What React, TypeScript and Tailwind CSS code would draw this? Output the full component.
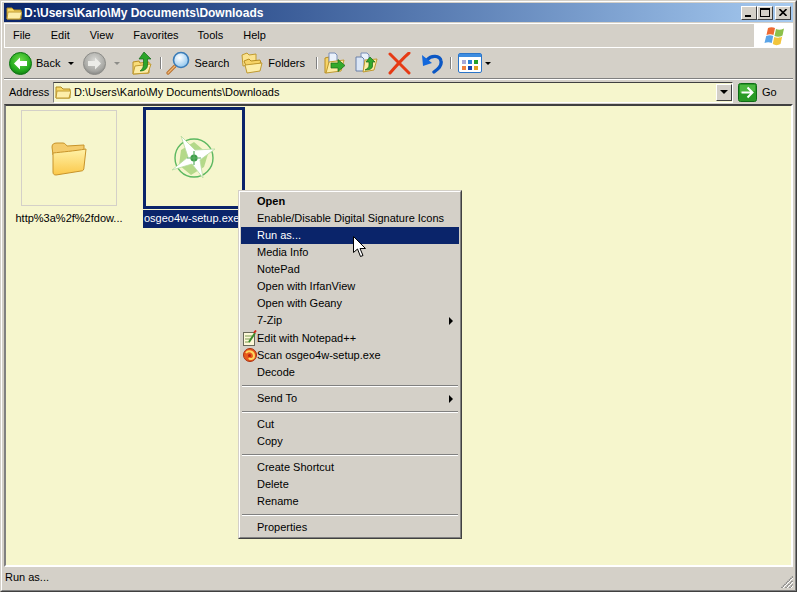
import type { ReactNode } from 'react';

const menuItems = ['File', 'Edit', 'View', 'Favorites', 'Tools', 'Help'];

type Row =
  | { kind: 'sep' }
  | { kind: 'item'; label: string; bold?: boolean; active?: boolean; sub?: boolean; icon?: ReactNode; tall?: boolean };

function FolderGlyph({ x = 0, y = 0 }: { x?: number; y?: number }) {
  return (
    <g transform={`translate(${x} ${y})`}>
      <path d="M1 3 L6 3 L8 5 L15 5 L15 14 L1 14 Z" fill="#f8d868" stroke="#b08a20" strokeWidth="1" />
      <path d="M2 7 L16 7 L14 14 L1 14 Z" fill="#fdeeaa" stroke="#c09a30" strokeWidth="1" />
    </g>
  );
}

function RoundArrow({ grey, flip }: { grey?: boolean; flip?: boolean }) {
  const id = grey ? 'roundGrey' : 'roundGreen';
  return (
    <svg width="23" height="23" viewBox="0 0 23 23" className="block">
      <defs>
        <radialGradient id={id} cx="50%" cy="35%" r="70%">
          <stop offset="0%" stopColor={grey ? '#d8d8d4' : '#6fdc4a'} />
          <stop offset="70%" stopColor={grey ? '#a8a8a4' : '#22a81c'} />
          <stop offset="100%" stopColor={grey ? '#7c7c7a' : '#0c6e10'} />
        </radialGradient>
      </defs>
      <circle cx="11.5" cy="11.5" r="11" fill={`url(#${id})`} stroke={grey ? '#8c8c88' : '#0f7414'} />
      <g transform={flip ? 'matrix(-1 0 0 1 23 0)' : undefined}>
        <path d="M5 11.5 L11 5.5 L11 9 L18 9 L18 14 L11 14 L11 17.5 Z" fill={grey ? '#ecece8' : '#ffffff'} />
      </g>
    </svg>
  );
}

function UpIcon() {
  return (
    <svg width="20" height="24" viewBox="0 0 20 24" className="block">
      <path d="M1 11 L7 10 L8 12 L17 11 L17 22 L1 23 Z" fill="#f9dc78" stroke="#b88e22" />
      <path d="M3 15 L19 13 L16 22 L1 23 Z" fill="#fdeca4" stroke="#c09a30" />
      <path d="M12 1 L19 8 L15.5 8 L15.5 14 C15.5 18 12 20 8 20 C10.5 18 11.5 16 11.5 13 L11.5 8 L7 8 Z" fill="#2ca52a" stroke="#14691a" strokeWidth="0.7" />
    </svg>
  );
}

function SearchIcon() {
  return (
    <svg width="25" height="25" viewBox="0 0 25 25" className="block">
      <defs>
        <radialGradient id="lens" cx="40%" cy="35%" r="70%">
          <stop offset="0%" stopColor="#ffffff" />
          <stop offset="100%" stopColor="#8cc4ee" />
        </radialGradient>
      </defs>
      <path d="M9 15 L2 22" stroke="#b8702c" strokeWidth="3.2" strokeLinecap="round" />
      <path d="M9 15 L2 22" stroke="#f0b878" strokeWidth="1.2" strokeLinecap="round" />
      <circle cx="15" cy="9" r="7.5" fill="url(#lens)" stroke="#3a7cb8" strokeWidth="1.6" />
    </svg>
  );
}

function FoldersIcon() {
  return (
    <svg width="22" height="22" viewBox="0 0 22 22" className="block">
      <path d="M1 3 L6 1 L8 3 L15 2 L15 12 L2 14 Z" fill="#fbe390" stroke="#c09a30" />
      <path d="M3 9 L8 7 L10 9 L19 8 L20 11 L5 14 Z" fill="#f7d468" stroke="#b88e22" />
      <path d="M6 21 L4 13 L21 11 L19 19 Z" fill="#fdeeaa" stroke="#c09a30" />
    </svg>
  );
}

function MoveToIcon() {
  return (
    <svg width="22" height="22" viewBox="0 0 22 22" className="block">
      <path d="M1 6 L5 5 L5 20 L1 21 Z" fill="#f7d468" stroke="#b88e22" />
      <path d="M5 1 L11 1 L13 3 L13 12 L5 13 Z" fill="#eaf1fb" stroke="#7a8fb8" />
      <path d="M2 21 L5 10 L20 8 L17 19 Z" fill="#fdeca4" stroke="#c09a30" />
      <path d="M7 11 L14 11 L14 7.5 L21 13.5 L14 19.5 L14 16 L7 16 Z" fill="#33a92c" stroke="#14691a" strokeWidth="0.7" />
    </svg>
  );
}

function CopyToIcon() {
  return (
    <svg width="23" height="22" viewBox="0 0 23 22" className="block">
      <path d="M6 1 L12 1 L14 3 L14 12 L6 12 Z" fill="#eaf1fb" stroke="#7a8fb8" />
      <path d="M1 5 L7 5 L9 7 L9 19 L1 19 Z" fill="#dbe6f6" stroke="#6a80a8" />
      <path d="M8 20 L10 8 L22 7 L19 18 Z" fill="#fdeca4" stroke="#c09a30" />
      <path d="M15 5 L20 10 L17.5 10 L17.5 14 C17.5 17 14 18 10 18 C13 16.5 14 15 14 13 L14 10 L11 10 Z" fill="#33a92c" stroke="#14691a" strokeWidth="0.7" />
    </svg>
  );
}

function DeleteIcon() {
  return (
    <svg width="23" height="23" viewBox="0 0 23 23" className="block">
      <path d="M2 2 C8 8 14 14 21 21" stroke="#e63a14" strokeWidth="3" fill="none" strokeLinecap="round" />
      <path d="M21 1 C14 7 8 14 2 21" stroke="#e63a14" strokeWidth="3" fill="none" strokeLinecap="round" />
    </svg>
  );
}

function UndoIcon() {
  return (
    <svg width="22" height="21" viewBox="0 0 22 21" className="block">
      <path d="M6 7 C10 2 19 2 20 8 C21 13 17 16 13 19" stroke="#0b57c4" strokeWidth="3.4" fill="none" strokeLinecap="round" />
      <path d="M1 2 L2 13 L11 10 Z" fill="#1368dc" />
    </svg>
  );
}

function ViewsIcon() {
  const colors = ['#a8a8d8', '#2d82d8', '#22a02a', '#f08040', '#1644b0', '#e0a020'];
  return (
    <svg width="24" height="20" viewBox="0 0 24 20" className="block">
      <rect x="0.5" y="0.5" width="23" height="19" rx="1.5" fill="#ffffff" stroke="#2a74c8" />
      <rect x="1" y="1" width="22" height="3" fill="#3d8ce0" />
      {colors.map((c, i) => (
        <rect key={c} x={4 + (i % 3) * 6} y={7 + Math.floor(i / 3) * 6} width="4" height="4" fill={c} />
      ))}
    </svg>
  );
}

function FlagIcon() {
  return (
    <svg width="22" height="20" viewBox="0 0 22 20" className="block">
      <path d="M5 2 C7 1 10 1 12 2 L10.5 9 C8.5 8 6 8 3.5 9 Z" fill="#ee6a32" />
      <path d="M13 3 C15 4 18 4 21 2.5 L19.5 9.5 C17 11 14 11 11.5 10 Z" fill="#8cc04a" />
      <path d="M3.2 10 C6 9 8 9 10.2 10 L8.8 17 C6.5 16 4 16 1.5 17 Z" fill="#5aa4e8" />
      <path d="M11.2 11 C14 12 17 12 19.2 10.5 L17.5 18 C15 19.5 12 19.5 9.8 18 Z" fill="#f2c53c" />
    </svg>
  );
}

function GoIcon() {
  return (
    <svg width="19" height="19" viewBox="0 0 19 19" className="block">
      <rect x="0.5" y="0.5" width="18" height="18" rx="2" fill="#2a9a26" stroke="#0f6c16" />
      <path d="M2 2 L17 2 L17 8 L2 10 Z" fill="#4cb840" />
      <path d="M3.5 9.5 L14 9.5 M9.5 4.5 L14.5 9.5 L9.5 14.5" stroke="#ffffff" strokeWidth="2" fill="none" />
    </svg>
  );
}

function ThumbFolder() {
  return (
    <svg width="38" height="38" viewBox="0 0 38 38" className="block">
      <defs>
        <linearGradient id="thumbFolder" x1="0" y1="0" x2="0" y2="1">
          <stop offset="0%" stopColor="#fff2a8" />
          <stop offset="100%" stopColor="#fbc84a" />
        </linearGradient>
      </defs>
      <path d="M2 8 C2 5 4 4 7 4 L13 4 C15 4 16 6 17 7 L34 6 L34 12 L3 16 Z" fill="#f4cc6c" stroke="#c8942a" />
      <path d="M3 14 C12 13 24 12 36 10 L34 28 C34 31 33 32 31 32 L6 36 C4 36 3 35 3 33 Z" fill="url(#thumbFolder)" stroke="#c8942a" />
    </svg>
  );
}

function StarLogo() {
  return (
    <svg width="46" height="46" viewBox="0 0 46 46" className="block">
      <circle cx="23" cy="23" r="19" fill="none" stroke="#5cb860" strokeWidth="1.4" />
      <path d="M23 7 L37 19 L33 32 L20 40 L8 30 L10 15 Z" fill="#a8d47c" opacity="0.85" />
      <path d="M10 1 L24 15 L44 14 L29 25 L32 43 L21 29 L1 35 L17 22 Z" fill="#ffffff" stroke="#b8dca0" strokeWidth="0.8" />
      <circle cx="23" cy="23" r="3.6" fill="#3c9c48" />
      <path d="M23 16 L23 30 M16 23 L30 23" stroke="#5cb064" strokeWidth="1.2" />
    </svg>
  );
}

function NotepadIcon() {
  return (
    <svg width="14" height="16" viewBox="0 0 14 16" className="block">
      <rect x="0.5" y="2.5" width="11" height="13" fill="#fdf8d8" stroke="#6a6a5a" />
      <path d="M2 6 L9 6 M2 9 L8 9 M2 12 L7 12" stroke="#7a9a50" />
      <path d="M6 12 L12 3" stroke="#3c8c2c" strokeWidth="2" />
      <path d="M11 3 L13 0.5" stroke="#d02818" strokeWidth="2" />
    </svg>
  );
}

function ScanIcon() {
  return (
    <svg width="14" height="14" viewBox="0 0 14 14" className="block">
      <circle cx="7" cy="7" r="6.5" fill="#e85a1c" stroke="#a83010" />
      <path d="M3 5 C5 2 11 3 11 8 C11 11 7 12 6 10" fill="none" stroke="#ffd860" strokeWidth="2" />
      <circle cx="6.5" cy="7.5" r="1.5" fill="#b82010" />
    </svg>
  );
}

function Cursor() {
  return (
    <svg width="14" height="22" viewBox="0 0 14 22" className="block">
      <path d="M0.5 0.5 L0.5 16.5 L4.5 13 L7.5 20.5 L10 19.5 L7 12.5 L12.5 12.5 Z" fill="#ffffff" stroke="#000000" />
    </svg>
  );
}

function Grip() {
  return (
    <svg width="13" height="13" viewBox="0 0 13 13" className="block">
      {[0, 4, 8].map((o) => (
        <g key={o}>
          <path d={`M${o + 1.5} 13 L13 ${o + 1.5}`} stroke="#808080" strokeWidth="1.4" strokeDasharray="1.4 0.7" />
          <path d={`M${o + 3} 13 L13 ${o + 3}`} stroke="#ffffff" strokeWidth="1" />
        </g>
      ))}
    </svg>
  );
}

function DropArrow({ grey }: { grey?: boolean }) {
  return <span className={`block h-0 w-0 border-x-[3px] border-t-[3px] border-x-transparent ${grey ? 'border-t-[#8c8c88]' : 'border-t-black'}`} />;
}

function ToolSep() {
  return <span className="h-[26px] w-[2px] border-l border-l-[#808080] border-r border-r-white" />;
}

function CaptionButton({ children }: { children: ReactNode }) {
  return (
    <span className="flex h-[14px] w-[16px] items-center justify-center border border-t-white border-l-white border-r-[#404040] border-b-[#404040] bg-[#d4d0c8]">
      {children}
    </span>
  );
}

const rows: Row[] = [
  { kind: 'item', label: 'Open', bold: true },
  { kind: 'item', label: 'Enable/Disable Digital Signature Icons' },
  { kind: 'item', label: 'Run as...', active: true },
  { kind: 'item', label: 'Media Info' },
  { kind: 'item', label: 'NotePad' },
  { kind: 'item', label: 'Open with IrfanView' },
  { kind: 'item', label: 'Open with Geany' },
  { kind: 'item', label: '7-Zip', sub: true },
  { kind: 'item', label: 'Edit with Notepad++', icon: <NotepadIcon />, tall: true },
  { kind: 'item', label: 'Scan osgeo4w-setup.exe', icon: <ScanIcon /> },
  { kind: 'item', label: 'Decode' },
  { kind: 'sep' },
  { kind: 'item', label: 'Send To', sub: true },
  { kind: 'sep' },
  { kind: 'item', label: 'Cut' },
  { kind: 'item', label: 'Copy' },
  { kind: 'sep' },
  { kind: 'item', label: 'Create Shortcut' },
  { kind: 'item', label: 'Delete' },
  { kind: 'item', label: 'Rename' },
  { kind: 'sep' },
  { kind: 'item', label: 'Properties' },
];

function ContextMenu() {
  return (
    <div className="absolute left-[237px] top-[189px] w-[224px] border border-t-[#d4d0c8] border-l-[#d4d0c8] border-r-[#404040] border-b-[#404040] bg-[#d4d0c8]">
      <div className="border border-t-white border-l-white border-r-[#808080] border-b-[#808080] p-px">
        {rows.map((row, i) =>
          row.kind === 'sep' ? (
            <div key={i} className="flex h-[9px] items-center px-px">
              <div className="h-[2px] w-full border-t border-t-[#808080] border-b border-b-white" />
            </div>
          ) : (
            <div
              key={i}
              className={`relative flex items-center pl-[16px] ${row.tall ? 'h-[18px]' : 'h-[17px]'} ${row.active ? 'bg-[#0a246a] text-white' : 'text-black'} ${row.bold ? 'font-bold' : ''}`}
            >
              {row.icon && <span className="absolute left-[2px] top-px">{row.icon}</span>}
              <span>{row.label}</span>
              {row.sub && (
                <span className="absolute right-[6px] top-[5px] h-0 w-0 border-y-[4px] border-l-[4px] border-y-transparent border-l-black" />
              )}
            </div>
          ),
        )}
      </div>
    </div>
  );
}

export default function App() {
  return (
    <div className="relative h-[592px] w-[797px] overflow-hidden border border-t-[#d4d0c8] border-l-[#d4d0c8] border-r-[#404040] border-b-[#404040] bg-[#d4d0c8] font-['Liberation_Sans',sans-serif] text-[11px] text-black">
      <div className="flex h-full flex-col border border-t-white border-l-white border-r-[#808080] border-b-[#808080] px-[2px] pt-px pb-[2px]">
        {/* title bar */}
        <div className="flex h-[19px] shrink-0 items-center bg-gradient-to-r from-[#0a246a] to-[#a6caf0] pl-[2px] pr-[2px]">
          <svg width="16" height="16" viewBox="0 0 16 16" className="mr-[2px] block">
            <FolderGlyph />
          </svg>
          <span className="text-[12px] font-bold text-white">D:\Users\Karlo\My Documents\Downloads</span>
          <div className="ml-auto flex items-center">
            <CaptionButton>
              <span className="mt-[7px] mr-[3px] block h-[2px] w-[6px] bg-black" />
            </CaptionButton>
            <CaptionButton>
              <span className="block h-[9px] w-[10px] border border-t-2 border-black" />
            </CaptionButton>
            <span className="ml-[2px]">
              <CaptionButton>
                <svg width="8" height="7" viewBox="0 0 8 7" className="block">
                  <path d="M0.5 0 L7.5 7 M7.5 0 L0.5 7" stroke="#000" strokeWidth="1.6" />
                </svg>
              </CaptionButton>
            </span>
          </div>
        </div>

        {/* menu bar */}
        <div className="mt-px flex h-[25px] shrink-0 border-t border-t-white border-l border-l-white border-b border-b-white">
          <div className="flex items-center gap-[20px] pl-[8px]">
            {menuItems.map((m, i) => (
              <span key={m} className={i === 3 ? 'mr-[-1px]' : ''}>
                {m}
              </span>
            ))}
          </div>
          <div className="ml-auto flex w-[39px] items-center justify-center bg-white">
            <FlagIcon />
          </div>
        </div>

        {/* toolbar */}
        <div className="flex h-[31px] shrink-0 items-center border-b border-b-[#808080] pl-[5px]">
          <RoundArrow />
          <span className="ml-[4px]">Back</span>
          <span className="ml-[8px]"><DropArrow /></span>
          <span className="ml-[9px]"><RoundArrow grey flip /></span>
          <span className="ml-[8px]"><DropArrow grey /></span>
          <span className="ml-[12px]"><UpIcon /></span>
          <span className="ml-[8px]"><ToolSep /></span>
          <span className="ml-[4px]"><SearchIcon /></span>
          <span className="ml-[3px]">Search</span>
          <span className="ml-[12px]"><FoldersIcon /></span>
          <span className="ml-[5px]">Folders</span>
          <span className="ml-[11px]"><ToolSep /></span>
          <span className="ml-[6px]"><MoveToIcon /></span>
          <span className="ml-[9px]"><CopyToIcon /></span>
          <span className="ml-[10px]"><DeleteIcon /></span>
          <span className="ml-[10px]"><UndoIcon /></span>
          <span className="ml-[7px]"><ToolSep /></span>
          <span className="ml-[6px]"><ViewsIcon /></span>
          <span className="ml-[3px]"><DropArrow /></span>
        </div>

        {/* address bar */}
        <div className="flex h-[25px] shrink-0 items-center border-t border-t-white">
          <span className="ml-[5px] w-[44px]">Address</span>
          <div className="flex h-[21px] w-[680px] items-center border border-t-[#404040] border-l-[#808080] border-r-white border-b-white bg-[#f6f6cd]">
            <svg width="16" height="16" viewBox="0 0 16 16" className="ml-px block">
              <FolderGlyph />
            </svg>
            <span className="ml-[3px]">D:\Users\Karlo\My Documents\Downloads</span>
            <span className="ml-auto flex h-[17px] w-[16px] items-center justify-center border border-t-white border-l-white border-r-[#404040] border-b-[#404040] bg-[#d4d0c8]">
              <span className="block h-0 w-0 border-x-[4px] border-t-[4px] border-x-transparent border-t-black" />
            </span>
          </div>
          <span className="ml-[5px]"><GoIcon /></span>
          <span className="ml-[5px]">Go</span>
        </div>

        {/* file view */}
        <div className="flex min-h-0 flex-1 items-start border-2 border-t-[#404040] border-l-[#808080] border-r-white border-b-white bg-[#f6f6cd]">
          <div className="ml-[5px] mt-[4px] flex w-[116px] flex-col items-center">
            <div className="flex h-[96px] w-[96px] items-center justify-center border border-[#d4d0c8]">
              <ThumbFolder />
            </div>
            <span className="mt-[4px]">http%3a%2f%2fdow...</span>
          </div>
          <div className="ml-[16px] mt-px flex w-[102px] flex-col items-start">
            <div className="flex h-[102px] w-[102px] items-center justify-center border-[3px] border-[#0a246a]">
              <StarLogo />
            </div>
            <span className="mt-px bg-[#0a246a] px-px pb-px text-white">osgeo4w-setup.exe</span>
          </div>
        </div>

        {/* status bar */}
        <div className="relative flex h-[21px] shrink-0 items-center pl-[1px]">
          <span>Run as...</span>
          <span className="absolute bottom-0 right-0"><Grip /></span>
        </div>
      </div>

      <ContextMenu />
      <div className="absolute left-[352px] top-[235px]">
        <Cursor />
      </div>
    </div>
  );
}
